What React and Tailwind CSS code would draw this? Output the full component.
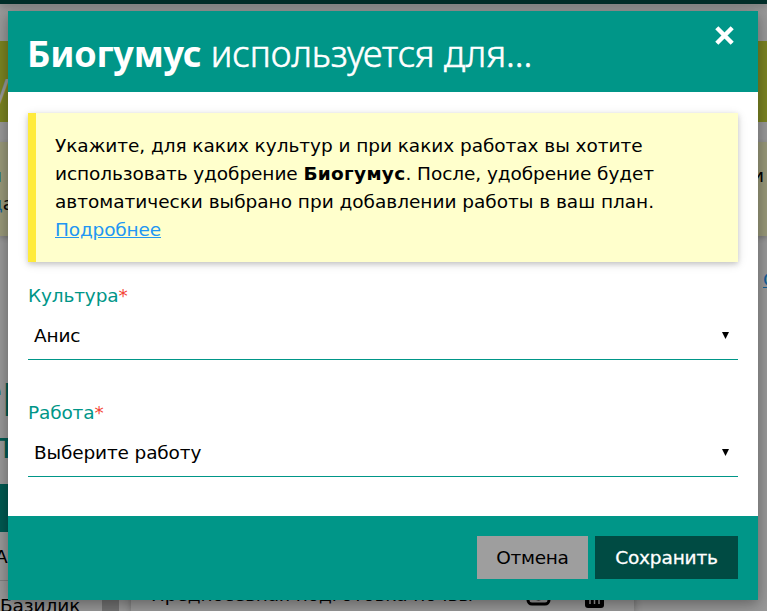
const body = "font-['DejaVu_Sans',Verdana,sans-serif]";

function Backdrop() {
  return (
    <div className="h-[611px] w-[767px] overflow-hidden bg-[#999999] text-black">
      <div className="h-1 bg-[#002e29] shadow-[0_2px_6px_rgba(0,0,0,0.25)]" />
      <div className="mt-[37px] flex h-[81px] items-center bg-[#7b8422] font-['Noto_Sans',sans-serif] text-[36px] text-[#999999]">
        <span className="-ml-[9px] pt-[8px] leading-none">у</span>
      </div>
      <div className="mt-5 flex h-[94px] justify-between bg-[#99997a] pt-[20px] text-[18.5px] leading-7 shadow-[0_2px_5px_rgba(0,0,0,0.2)]">
        <div className="-ml-[10px]">
          <div className="text-[#136199]">и</div>
          <div><span className="text-[#136199]">д</span>а</div>
        </div>
        <div className="w-[15px]">и</div>
      </div>
      <div className="mt-[30px] flex h-7 justify-end text-[18.5px] leading-7 text-[#136199] underline">
        <span className="w-[4px]">С</span>
      </div>
      <div className="mt-[72px] h-[50px] font-['Noto_Sans',sans-serif] text-[42px] leading-[48px] text-[#005a52]">
        <span className="-ml-[21px]">ер</span>
      </div>
      <div className="mt-[10px] h-[40px] font-['Noto_Sans',sans-serif] text-[36px] leading-[38px] text-[#005a52]">
        <span className="-ml-[2px]">т</span>
      </div>
      <div className="mt-[18px] flex h-[127px]">
        <div className="w-[102px] shrink-0 text-[18.5px]">
          <div className="h-12 bg-[#005a52]" />
          <div className="h-[49px] border-b border-[#808080] pt-[11px] leading-7">
            <span className="-ml-[5px]">А</span>
          </div>
          <div className="pt-[11px] leading-7 tracking-[-0.1px]">Базилик</div>
        </div>
        <div className="w-[17px] shrink-0 bg-[#737373]" />
        <div className="ml-3 flex w-[503px] items-start bg-[#999999] pt-[97px] text-[18.5px] leading-7 shadow-[0_2px_8px_rgba(0,0,0,0.3)]">
          <span className="ml-[20px] w-[330px] whitespace-nowrap tracking-[-0.1px]">Предпосевная подготовка почвы</span>
          <svg className="ml-[45px] h-[26px] w-[26px]" viewBox="0 0 26 26" fill="none" stroke="black" strokeWidth="3">
            <rect x="2" y="4" width="21" height="19" rx="4" />
            <circle cx="12.5" cy="13" r="5" />
          </svg>
          <svg className="ml-[32px] h-[28px] w-[22px]" viewBox="0 0 22 28">
            <path d="M1 5h19v19q0 3-3 3H4q-3 0-3-3z" fill="black" />
            <path d="M6 9v14M10.5 9v14M15 9v14" stroke="#999999" strokeWidth="1.5" />
          </svg>
        </div>
      </div>
    </div>
  );
}

function Field({ label, value }) {
  return (
    <div className="h-[117px]">
      <div className="h-7 text-[18.5px] leading-7 tracking-[-0.15px] text-[#009688]">
        {label}<span className="text-[#f44336]">*</span>
      </div>
      <div className="mt-[2px] flex h-[48px] items-center justify-between border-b border-[#009688] pr-[9px] pl-[6px] text-[18.5px]">
        <span className="tracking-[-0.15px]">{value}</span>
        <svg className="mb-[1px] h-[7px] w-[7px]" viewBox="0 0 7 7"><path d="M0 0h7L3.5 7z" /></svg>
      </div>
    </div>
  );
}

export default function App() {
  return (
    <div className={`relative h-[611px] w-[767px] overflow-hidden ${body}`}>
      <Backdrop />
      <div className="absolute top-[11px] left-2 flex h-[589px] w-[750px] flex-col bg-white text-black shadow-[0_4px_10px_rgba(0,0,0,0.2),0_4px_20px_rgba(0,0,0,0.19)]">
        <header className="flex h-[81px] shrink-0 justify-between bg-[#009688] pr-[23px] pl-5 text-white">
          <h1 className="-ml-[1px] pt-[16px] font-['Noto_Sans',sans-serif] text-[36px] leading-[54px] whitespace-nowrap">
            <b className="tracking-[-0.2px]">Биогумус</b>
            <span className="font-light tracking-[-0.07px] [-webkit-text-stroke:0.6px_white]"> используется для...</span>
          </h1>
          <svg className="mt-[15px] h-5 w-5" viewBox="0 0 20 20" fill="none" stroke="white" strokeWidth="4.4">
            <path d="M1.8 1.8l15.4 15.4M17.2 1.8L1.8 17.2" />
          </svg>
        </header>
        <main className="px-5 pt-[21px]">
          <div className="h-[149px] border-l-8 border-[#ffeb3b] bg-[#ffffcc] pt-[19px] pl-[19px] text-[18.5px] leading-7 whitespace-nowrap shadow-[0_2px_5px_rgba(0,0,0,0.16),0_2px_10px_rgba(0,0,0,0.12)]">
            <div className="tracking-[-0.05px]">Укажите, для каких культур и при каких работах вы хотите</div>
            <div className="tracking-[-0.08px]">использовать удобрение <b className="tracking-[0.3px]">Биогумус</b>. После, удобрение будет</div>
            <div className="tracking-[-0.02px]">автоматически выбрано при добавлении работы в ваш план.</div>
            <a className="tracking-[-0.15px] text-[#2196f3] underline">Подробнее</a>
          </div>
          <div className="mt-5">
            <Field label="Культура" value="Анис" />
            <Field label="Работа" value="Выберите работу" />
          </div>
        </main>
        <footer className="mt-auto flex h-[84px] shrink-0 justify-end gap-[7px] bg-[#009688] px-5 pt-5 text-[18.5px]">
          <button className="h-[43px] w-[111px] bg-[#9e9e9e] tracking-[-0.3px]">Отмена</button>
          <button className="h-[43px] w-[143px] bg-[#004b43] tracking-[-0.15px] text-white [-webkit-text-stroke:0.3px_white]">Сохранить</button>
        </footer>
      </div>
    </div>
  );
}
